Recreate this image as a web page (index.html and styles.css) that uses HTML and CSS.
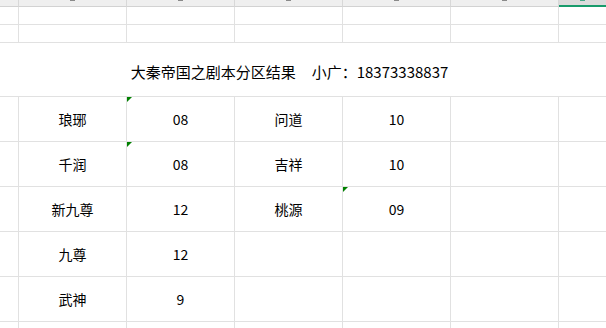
FILE: index.html
```html
<!DOCTYPE html>
<html>
<head>
<meta charset="utf-8">
<link rel="stylesheet" href="styles.css">
</head>
<body>
<div class="sheet">
  <div class="hd"><i class="mk"></i></div>
  <div class="hd"><i class="mk"></i></div>
  <div class="hd"><i class="mk"></i></div>
  <div class="hd"><i class="mk"></i></div>
  <div class="hd"><i class="mk"></i></div>
  <div class="hd"><i class="mk"></i></div>
  <div class="hd sel"><i class="mk"></i></div>

  <div class="c r1"></div><div class="c r1"></div><div class="c r1"></div><div class="c r1"></div><div class="c r1"></div><div class="c r1"></div><div class="c r1 last"></div>
  <div class="c r1"></div><div class="c r1"></div><div class="c r1"></div><div class="c r1"></div><div class="c r1"></div><div class="c r1"></div><div class="c r1 last"></div>

  <div class="title"><span class="t">大秦帝国之剧本分区结果</span><span class="t2">小广：18373338837</span></div>

  <div class="c rr"></div><div class="c rr">琅琊</div><div class="c rr flag">08</div><div class="c rr">问道</div><div class="c rr">10</div><div class="c rr"></div><div class="c rr last"></div>
  <div class="c rr"></div><div class="c rr">千润</div><div class="c rr flag">08</div><div class="c rr">吉祥</div><div class="c rr">10</div><div class="c rr"></div><div class="c rr last"></div>
  <div class="c rr"></div><div class="c rr">新九尊</div><div class="c rr">12</div><div class="c rr">桃源</div><div class="c rr flag">09</div><div class="c rr"></div><div class="c rr last"></div>
  <div class="c rr"></div><div class="c rr">九尊</div><div class="c rr">12</div><div class="c rr"></div><div class="c rr"></div><div class="c rr"></div><div class="c rr last"></div>
  <div class="c rr"></div><div class="c rr">武神</div><div class="c rr">9</div><div class="c rr"></div><div class="c rr"></div><div class="c rr"></div><div class="c rr last"></div>
  <div class="c rr"></div><div class="c rr"></div><div class="c rr"></div><div class="c rr"></div><div class="c rr"></div><div class="c rr"></div><div class="c rr last"></div>
</div>
</body>
</html>
```

FILE: styles.css
```css
html, body {
  margin: 0;
  padding: 0;
  background: #ffffff;
  overflow: hidden;
}
body {
  width: 606px;
  height: 328px;
  font-family: "Noto Sans CJK SC", "Noto Sans", sans-serif;
  color: #000;
}
.sheet {
  display: grid;
  grid-template-columns: 19px 108px 108px 108px 108px 108px 47px;
  grid-template-rows: 7px 18px 18px 54px repeat(6, 45px);
  width: 606px;
  height: 328px;
  overflow: hidden;
}
.hd {
  background: #efefef;
  border-right: 1px solid #d8d8d8;
  border-bottom: 1px solid #d2d2d2;
  box-sizing: border-box;
  overflow: hidden;
  display: flex;
  justify-content: center;
  align-items: flex-start;
}
.mk {
  display: block;
  width: 5px;
  height: 1px;
  background: #8a8a8a;
}
.hd:first-child .mk {
  display: none;
}
.hd.sel {
  background: #dcdcdc;
  border-right: none;
  border-bottom: 2px solid #189b6b;
}
.hd.sel .mk {
  background: #4aa88a;
}
.c {
  border-right: 1px solid #e1e1e1;
  border-bottom: 1px solid #e1e1e1;
  box-sizing: border-box;
  display: flex;
  align-items: center;
  justify-content: center;
  font-size: 14px;
  position: relative;
}
.c.last {
  border-right: none;
}
.flag::before {
  content: "";
  position: absolute;
  left: 0;
  top: 0;
  width: 0;
  height: 0;
  border-top: 5px solid #008000;
  border-right: 5px solid transparent;
}
.title {
  grid-column: 1 / -1;
  border-bottom: 1px solid #e1e1e1;
  box-sizing: border-box;
  display: flex;
  align-items: center;
  justify-content: center;
  padding-left: 21px;
  padding-right: 48px;
  padding-top: 3px;
  font-size: 15px;
  gap: 16px;
}
```
